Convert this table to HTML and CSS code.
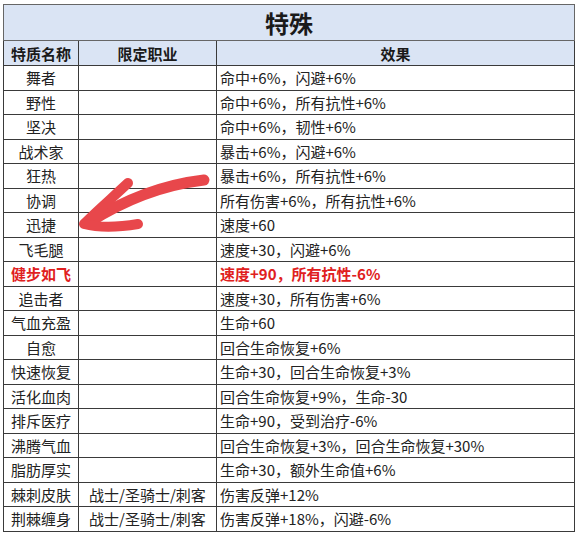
FILE: index.html
```html
<!DOCTYPE html>
<html>
<head>
<meta charset="utf-8">
<link rel="stylesheet" href="styles.css">
</head>
<body>
<div class="wrap">
<table class="tbl">
<colgroup><col class="c1"><col class="c2"><col class="c3"></colgroup>
<tr class="title"><td colspan="3">特殊</td></tr>
<tr class="head"><td>特质名称</td><td>限定职业</td><td>效果</td></tr>
<tr><td class="n">舞者</td><td class="j"></td><td class="e">命中+6%，闪避+6%</td></tr>
<tr><td class="n">野性</td><td class="j"></td><td class="e">命中+6%，所有抗性+6%</td></tr>
<tr><td class="n">坚决</td><td class="j"></td><td class="e">命中+6%，韧性+6%</td></tr>
<tr><td class="n">战术家</td><td class="j"></td><td class="e">暴击+6%，闪避+6%</td></tr>
<tr><td class="n">狂热</td><td class="j"></td><td class="e">暴击+6%，所有抗性+6%</td></tr>
<tr><td class="n">协调</td><td class="j"></td><td class="e">所有伤害+6%，所有抗性+6%</td></tr>
<tr><td class="n">迅捷</td><td class="j"></td><td class="e">速度+60</td></tr>
<tr><td class="n">飞毛腿</td><td class="j"></td><td class="e">速度+30，闪避+6%</td></tr>
<tr class="hot"><td class="n">健步如飞</td><td class="j"></td><td class="e">速度+90，所有抗性-6%</td></tr>
<tr><td class="n">追击者</td><td class="j"></td><td class="e">速度+30，所有伤害+6%</td></tr>
<tr><td class="n">气血充盈</td><td class="j"></td><td class="e">生命+60</td></tr>
<tr><td class="n">自愈</td><td class="j"></td><td class="e">回合生命恢复+6%</td></tr>
<tr><td class="n">快速恢复</td><td class="j"></td><td class="e">生命+30，回合生命恢复+3%</td></tr>
<tr><td class="n">活化血肉</td><td class="j"></td><td class="e">回合生命恢复+9%，生命-30</td></tr>
<tr><td class="n">排斥医疗</td><td class="j"></td><td class="e">生命+90，受到治疗-6%</td></tr>
<tr><td class="n">沸腾气血</td><td class="j"></td><td class="e">回合生命恢复+3%，回合生命恢复+30%</td></tr>
<tr><td class="n">脂肪厚实</td><td class="j"></td><td class="e">生命+30，额外生命值+6%</td></tr>
<tr><td class="n">棘刺皮肤</td><td class="j">战士/圣骑士/刺客</td><td class="e">伤害反弹+12%</td></tr>
<tr><td class="n">荆棘缠身</td><td class="j">战士/圣骑士/刺客</td><td class="e">伤害反弹+18%，闪避-6%</td></tr>
</table>
<svg class="arrow" width="576" height="536" viewBox="0 0 576 536">
<g fill="none" stroke="#e8474b" stroke-linecap="round" stroke-linejoin="round">
<path d="M204 180 C170 184 130 196 88 223" stroke-width="11"/>
<path d="M128 183 C112 198 98 210 85 223" stroke-width="10"/>
<path d="M84 224 C100 228 120 227 138 224" stroke-width="10"/>
</g>
</svg>
</div>
</body>
</html>
```
FILE: styles.css
```css
html, body {
  margin: 0;
  padding: 0;
  background: #ffffff;
}
body {
  font-family: "Noto Sans CJK SC", "Noto Sans", sans-serif;
  color: #222;
}
.wrap {
  position: relative;
  width: 576px;
  height: 536px;
  padding: 4px 0 0 3px;
  box-sizing: border-box;
}
.tbl {
  border-collapse: collapse;
  width: 571px;
  table-layout: fixed;
  font-size: 15px;
  line-height: 1;
}
.c1 { width: 75px; }
.c2 { width: 138px; }
.c3 { width: 358px; }
.tbl td {
  border: 1px solid #3a3a3a;
  height: 23.5px;
  padding: 0;
  white-space: nowrap;
  overflow: hidden;
}
.tbl tr.title td {
  height: 35px;
  background: #dae4f4;
  text-align: center;
  font-size: 24px;
  font-weight: bold;
  color: #1a1a1a;
  border-color: #666;
}
.tbl tr.head td {
  height: 24px;
  background: #dae4f4;
  text-align: center;
  font-weight: bold;
  color: #1a1a1a;
}
.n, .j { text-align: center; }
.e { padding-left: 3px !important; text-align: left; }
.hot td {
  color: #e02020;
  font-weight: bold;
}
.arrow {
  position: absolute;
  left: 0;
  top: 0;
  pointer-events: none;
}
```
